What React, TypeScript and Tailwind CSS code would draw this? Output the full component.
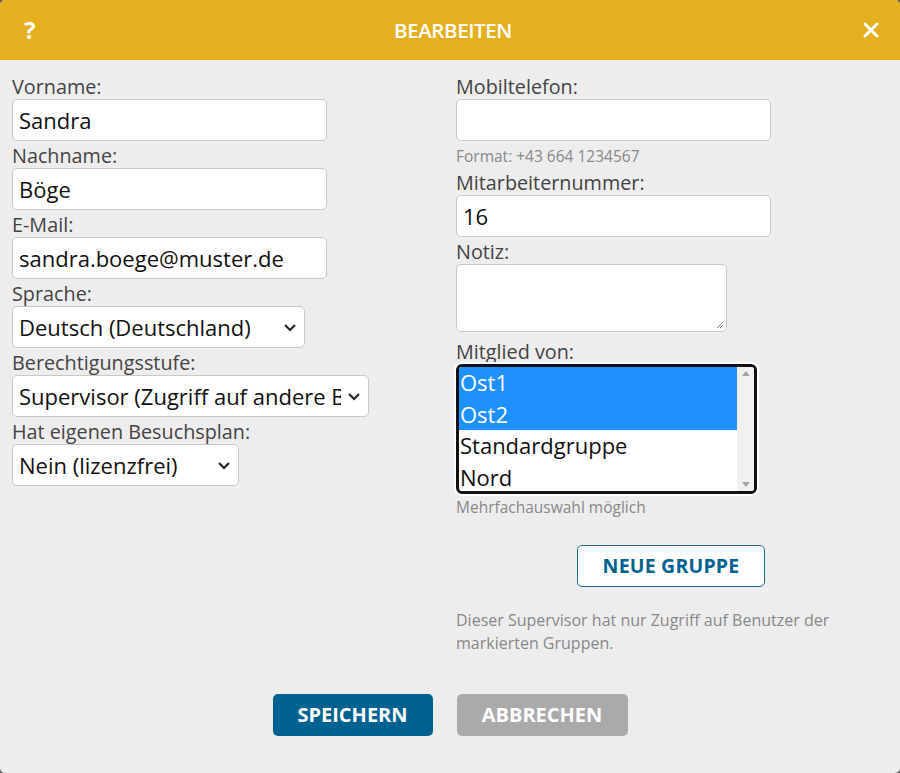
import React from 'react'

const font = { fontFamily: '"Open Sans", "Liberation Sans", sans-serif' }

function Label({ children }: { children: React.ReactNode }) {
  return <div className="text-[19.8px] leading-[24px] text-[#444]">{children}</div>
}

function TextInput({ value, width }: { value?: string; width: string }) {
  return (
    <div
      className={`${width} h-[42px] bg-white border border-[#c8c8c8] rounded-[5px] px-[6px] pt-[1px] flex items-center text-[22px] text-[#111] mb-[3px]`}
    >
      {value}
    </div>
  )
}

function Chevron() {
  return (
    <svg width="14" height="9" viewBox="0 0 14 9" className="shrink-0">
      <path d="M2 2l5 5 5-5" fill="none" stroke="#222" strokeWidth="2" />
    </svg>
  )
}

function Select({ value, width }: { value: string; width: string }) {
  return (
    <div
      className={`${width} h-[42px] bg-white border border-[#c8c8c8] rounded-[5px] pl-[6px] pr-[7px] pt-[1px] flex items-center gap-[6px] text-[22px] text-[#111] mb-[3px]`}
    >
      <span className="flex-1 overflow-hidden whitespace-nowrap">{value}</span>
      <Chevron />
    </div>
  )
}

function GroupList() {
  const groups = [
    { name: 'Ost1', selected: true },
    { name: 'Ost2', selected: true },
    { name: 'Standardgruppe', selected: false },
    { name: 'Nord', selected: false },
  ]
  return (
    <div className="w-[301px] h-[130px] rounded-[6px] border-[3px] border-[#111] ring-2 ring-white bg-white flex overflow-hidden">
      <div className="flex-1 flex flex-col">
        {groups.map((g) => (
          <div
            key={g.name}
            className={`h-[31.5px] px-[1px] flex items-center text-[22px] ${
              g.selected ? 'bg-[#1e90ff] text-white' : 'text-[#111]'
            }`}
          >
            {g.name}
          </div>
        ))}
      </div>
      <div className="w-[17px] bg-[#f1f1f1] flex flex-col items-center justify-between py-[4px]">
        <svg width="8" height="5" viewBox="0 0 8 5">
          <path d="M0 5L4 0L8 5Z" fill="#a3a3a3" />
        </svg>
        <svg width="8" height="5" viewBox="0 0 8 5">
          <path d="M0 0L4 5L8 0Z" fill="#a3a3a3" />
        </svg>
      </div>
    </div>
  )
}

export default function App() {
  return (
    <div className="w-[900px] h-[773px] bg-[#5a5a5a]" style={font}>
      <div className="w-full h-full rounded-[5px] overflow-hidden bg-[#ededed] flex flex-col">
        {/* Header */}
        <div className="h-[60px] bg-[#e5b020] flex items-center justify-between pl-[24px] pr-[22px] text-white">
          <span className="text-[24px] font-bold w-[20px] leading-none">?</span>
          <span className="text-[20.5px] font-semibold tracking-[-0.4px]">BEARBEITEN</span>
          <svg width="18" height="18" viewBox="0 0 18 18" className="mr-[-2px]">
            <path d="M3 3l12 12M15 3L3 15" stroke="white" strokeWidth="3" strokeLinecap="round" />
          </svg>
        </div>

        {/* Body */}
        <div className="flex px-[12px] pt-[15px]">
          <div className="w-[444px] flex flex-col">
            <Label>Vorname:</Label>
            <TextInput value="Sandra" width="w-[315px]" />
            <Label>Nachname:</Label>
            <TextInput value="Böge" width="w-[315px]" />
            <Label>E-Mail:</Label>
            <TextInput value="sandra.boege@muster.de" width="w-[315px]" />
            <Label>Sprache:</Label>
            <Select value="Deutsch (Deutschland)" width="w-[293px]" />
            <Label>Berechtigungsstufe:</Label>
            <Select value="Supervisor (Zugriff auf andere Benutzer)" width="w-[357px]" />
            <Label>Hat eigenen Besuchsplan:</Label>
            <Select value="Nein (lizenzfrei)" width="w-[227px]" />
          </div>

          <div className="flex-1 flex flex-col">
            <Label>Mobiltelefon:</Label>
            <TextInput width="w-[315px]" />
            <div className="text-[15.5px] leading-[22px] text-[#888] mt-[1px] mb-[4px]">Format: +43 664 1234567</div>
            <Label>Mitarbeiternummer:</Label>
            <TextInput value="16" width="w-[315px]" />
            <Label>Notiz:</Label>
            <div className="relative w-[271px] h-[68px] bg-white border border-[#c8c8c8] rounded-[5px] mb-[8px]">
              <svg width="8" height="8" viewBox="0 0 8 8" className="absolute right-[2px] bottom-[2px]">
                <path d="M7 1L1 7M7 4L4 7" stroke="#888" strokeWidth="1" />
              </svg>
            </div>
            <Label>Mitglied von:</Label>
            <GroupList />
            <div className="text-[15.5px] leading-[22px] text-[#888] mt-[2px]">Mehrfachauswahl möglich</div>
            <button className="self-start ml-[121px] mt-[27px] w-[188px] h-[42px] bg-white border border-[#1a6a94] rounded-[5px] text-[#00628f] text-[19.5px] font-bold tracking-[0.2px]">
              NEUE GRUPPE
            </button>
            <p className="mt-[22px] w-[385px] text-[16px] leading-[23px] text-[#888]">
              Dieser Supervisor hat nur Zugriff auf Benutzer der markierten Gruppen.
            </p>
          </div>
        </div>

        {/* Footer */}
        <div className="flex justify-center gap-[24px] mt-[39px]">
          <button className="w-[160px] h-[42px] bg-[#00628f] rounded-[5px] text-white text-[20px] font-bold">
            SPEICHERN
          </button>
          <button className="w-[171px] h-[42px] bg-[#aaaaaa] rounded-[5px] text-white text-[20px] font-bold">
            ABBRECHEN
          </button>
        </div>
      </div>
    </div>
  )
}
